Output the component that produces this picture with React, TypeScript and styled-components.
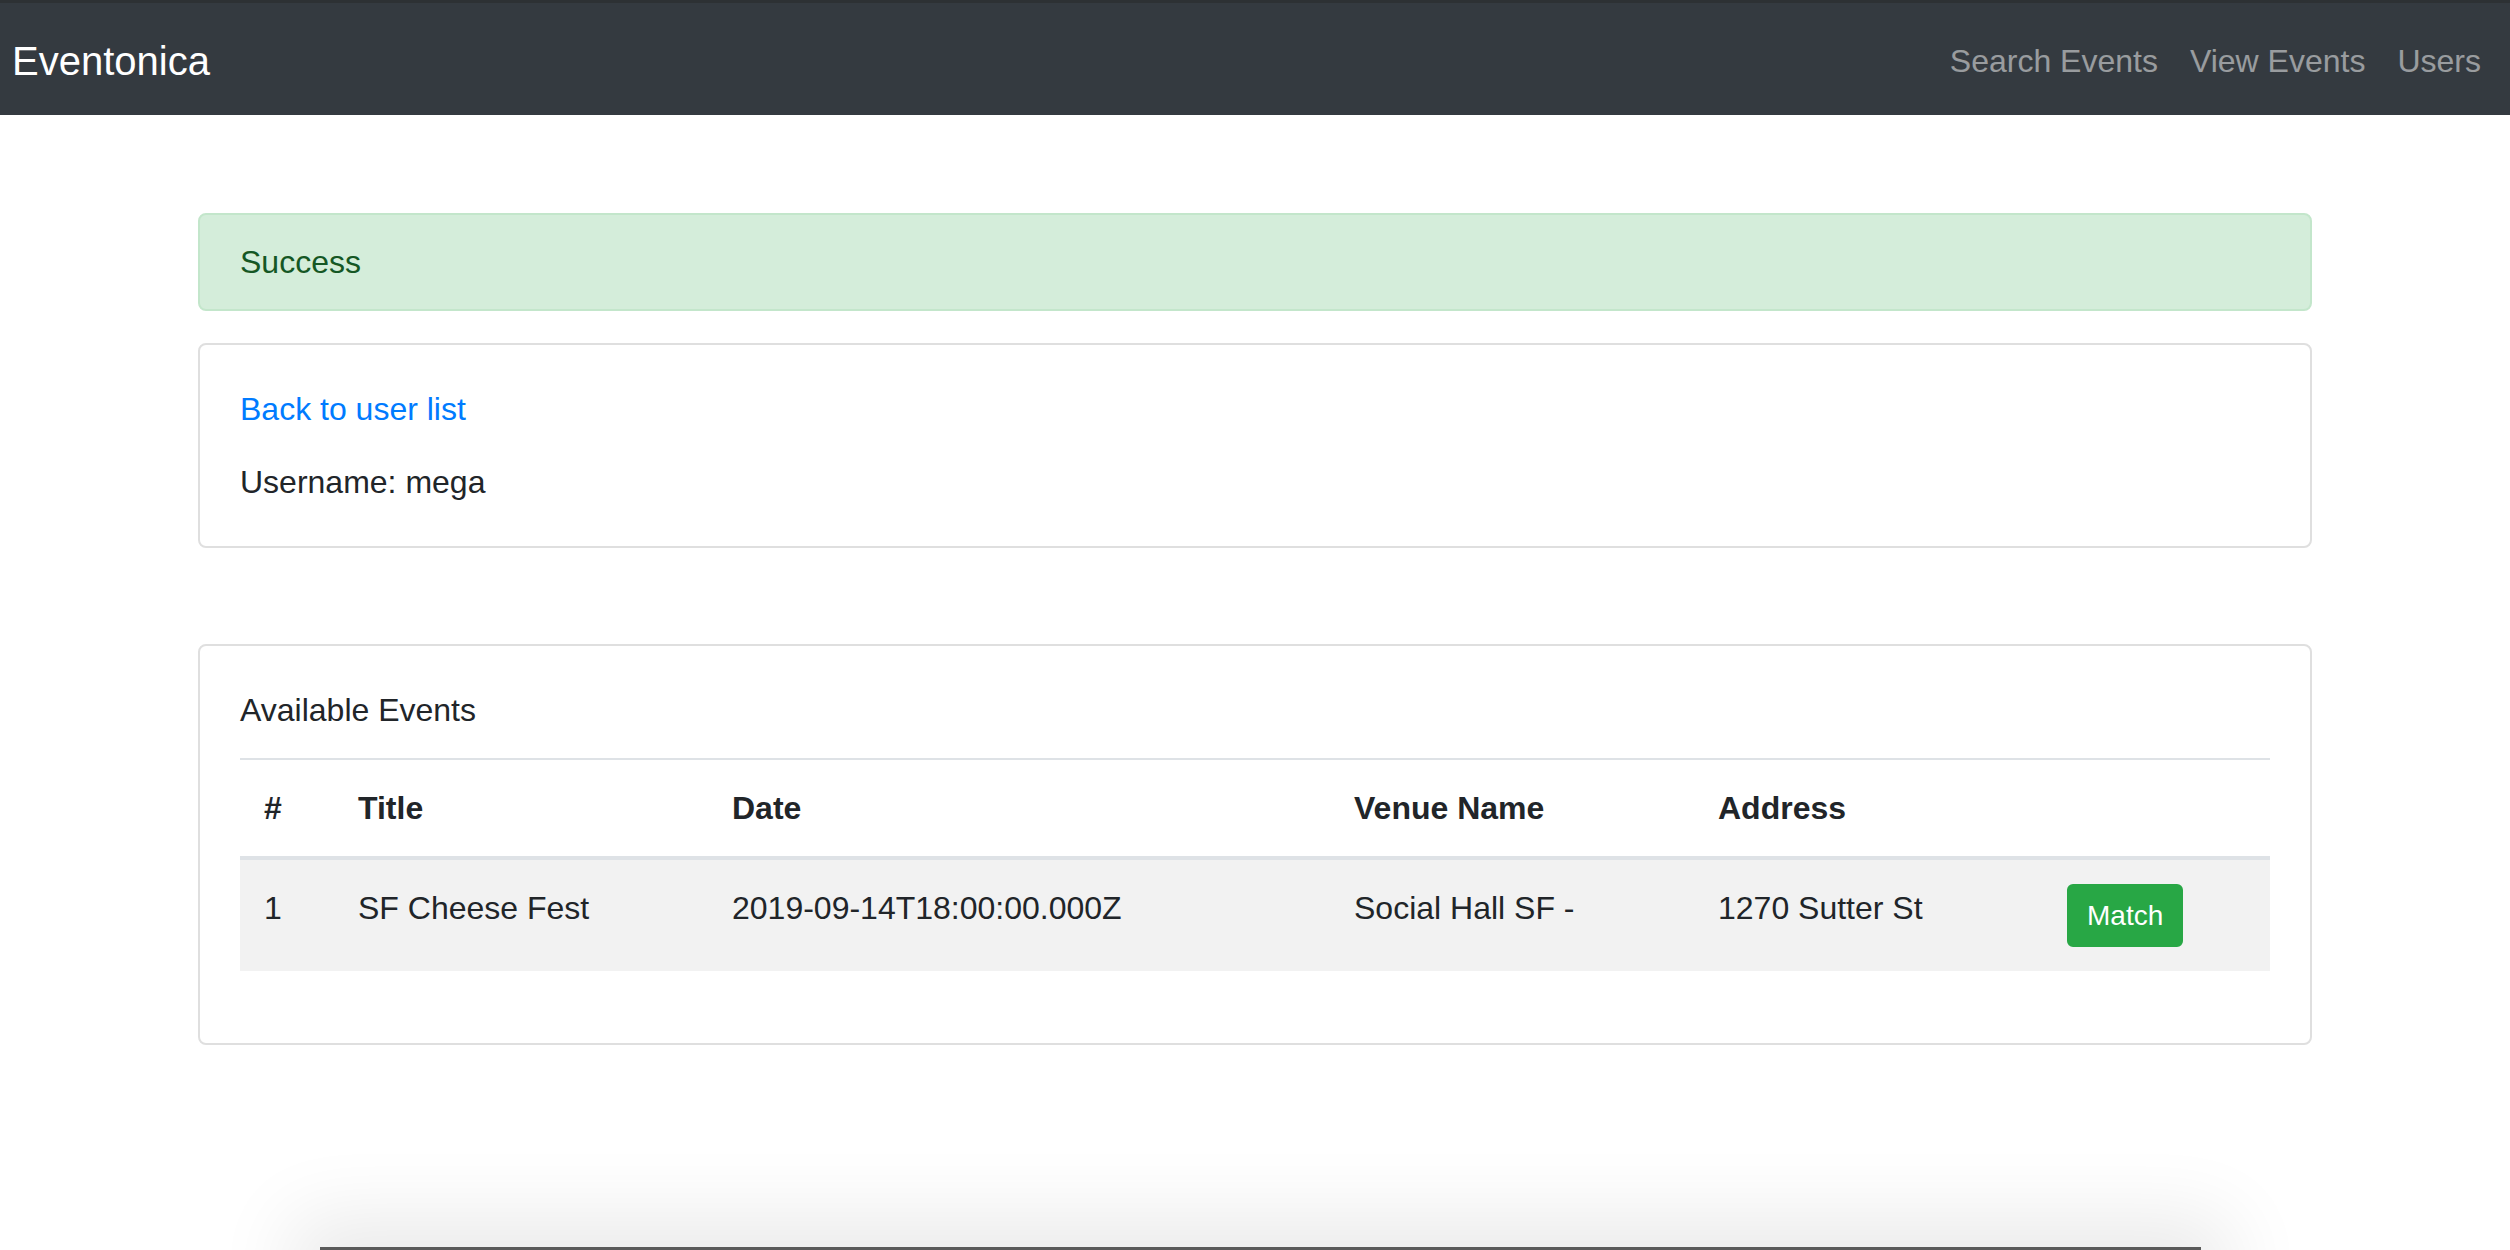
import React from "react";
import styled, { createGlobalStyle } from "styled-components";

const colors = {
    nav: "#343a40",
    navEdge: "#2d3134",
    navLink: "rgba(255, 255, 255, 0.5)",
    text: "#212529",
    link: "#007bff",
    border: "#dfdfdf",
    tableBorder: "#dee2e6",
    stripe: "#f2f2f2",
    successBg: "#d4edda",
    successBorder: "#c3e6cb",
    successText: "#155724",
    button: "#28a745",
};

const GlobalStyle = createGlobalStyle`
    html, body {
        margin: 0;
        padding: 0;
        background: #fff;
    }
    body {
        font-family: "Liberation Sans", Arial, sans-serif;
        font-size: 32px;
        line-height: 1.5;
        color: ${colors.text};
        overflow: hidden;
    }
    * {
        box-sizing: border-box;
    }
`;

const Navbar = styled.nav`
    display: flex;
    justify-content: space-between;
    align-items: center;
    background-color: ${colors.nav};
    border-top: 3px solid ${colors.navEdge};
    padding: 18px 13px 14px 12px;
`;

const Brand = styled.a`
    font-size: 40px;
    line-height: 60px;
    padding: 10px 0;
    color: #fff;
    text-decoration: none;
`;

const NavList = styled.ul`
    display: flex;
    list-style: none;
    margin: 0;
    padding: 0;
`;

const NavLink = styled.a`
    display: block;
    padding: 16px 16px;
    line-height: 48px;
    color: ${colors.navLink};
    text-decoration: none;
`;

const Container = styled.main`
    width: 2114px;
    margin: 0 auto;
    padding-top: 98px;
`;

const Alert = styled.div`
    padding: 23px 40px;
    margin-bottom: 32px;
    background-color: ${colors.successBg};
    border: 2px solid ${colors.successBorder};
    border-radius: 8px;
    color: ${colors.successText};
`;

const Card = styled.section<{ $gap?: number }>`
    margin-top: ${(p) => p.$gap ?? 0}px;
    border: 2px solid ${colors.border};
    border-radius: 8px;
    padding: 40px;
    background: #fff;
`;

const CardTitle = styled.div<{ $space?: number }>`
    margin-bottom: ${(p) => p.$space ?? 24}px;
`;

const BackLink = styled.a`
    color: ${colors.link};
    text-decoration: none;
`;

const Text = styled.p`
    margin: 0;
`;

const Table = styled.table`
    width: 100%;
    table-layout: fixed;
    border-collapse: collapse;
    margin-bottom: 32px;
`;

const Th = styled.th<{ $width: number }>`
    width: ${(p) => p.$width}px;
    padding: 24px;
    text-align: left;
    vertical-align: bottom;
    font-weight: bold;
    border-top: 2px solid ${colors.tableBorder};
    border-bottom: 4px solid ${colors.tableBorder};
    white-space: nowrap;
`;

const Row = styled.tr<{ $striped?: boolean }>`
    background-color: ${(p) => (p.$striped ? colors.stripe : "transparent")};
`;

const Td = styled.td`
    padding: 24px;
    vertical-align: top;
    white-space: nowrap;
`;

const MatchButton = styled.button`
    font-family: inherit;
    font-size: 28px;
    line-height: 42px;
    padding: 9px 18px 8px;
    color: #fff;
    background-color: ${colors.button};
    border: 2px solid ${colors.button};
    border-radius: 6px;
    cursor: pointer;
`;

// the edge of a window lying under the browser, with its shadow
const WindowEdge = styled.div`
    position: fixed;
    left: 320px;
    width: 1881px;
    bottom: -40px;
    height: 43px;
    background: #5a5a5a;
    box-shadow: 0 0 80px 28px rgba(0, 0, 0, 0.09);
`;

const columns = [
    { label: "#", width: 94 },
    { label: "Title", width: 374 },
    { label: "Date", width: 622 },
    { label: "Venue Name", width: 364 },
    { label: "Address", width: 349 },
    { label: "", width: 227 },
];

const events = [
    {
        id: 1,
        title: "SF Cheese Fest",
        date: "2019-09-14T18:00:00.000Z",
        venue: "Social Hall SF -",
        address: "1270 Sutter St",
    },
];

const App: React.FC = () => {
    return (
        <>
            <GlobalStyle />
            <Navbar>
                <Brand href="#">Eventonica</Brand>
                <NavList>
                    <li><NavLink href="#">Search Events</NavLink></li>
                    <li><NavLink href="#">View Events</NavLink></li>
                    <li><NavLink href="#">Users</NavLink></li>
                </NavList>
            </Navbar>
            <Container>
                <Alert>Success</Alert>
                <Card>
                    <CardTitle $space={25}>
                        <BackLink href="#">Back to user list</BackLink>
                    </CardTitle>
                    <Text>Username: mega</Text>
                </Card>
                <Card $gap={96}>
                    <CardTitle>Available Events</CardTitle>
                    <Table>
                        <thead>
                            <tr>
                                {columns.map((c, i) => (
                                    <Th key={i} $width={c.width}>{c.label}</Th>
                                ))}
                            </tr>
                        </thead>
                        <tbody>
                            {events.map((ev, i) => (
                                <Row key={ev.id} $striped={i % 2 === 0}>
                                    <Td>{ev.id}</Td>
                                    <Td>{ev.title}</Td>
                                    <Td>{ev.date}</Td>
                                    <Td>{ev.venue}</Td>
                                    <Td>{ev.address}</Td>
                                    <Td>
                                        <MatchButton>Match</MatchButton>
                                    </Td>
                                </Row>
                            ))}
                        </tbody>
                    </Table>
                </Card>
            </Container>
            <WindowEdge />
        </>
    );
};

export default App;
